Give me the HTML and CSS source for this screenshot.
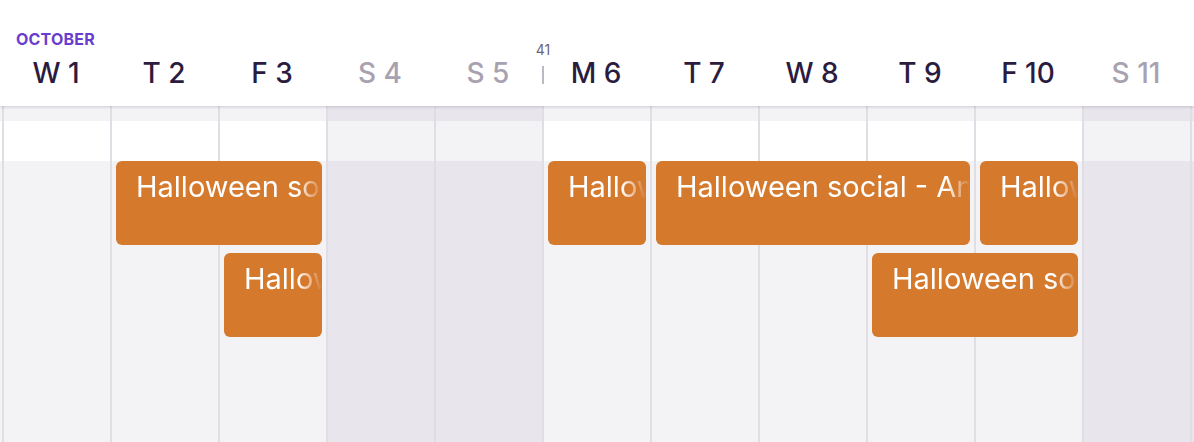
FILE: index.html
```html
<!DOCTYPE html>
<html lang="en">
<head>
<meta charset="utf-8">
<title>Calendar</title>
<link rel="stylesheet" href="styles.css">
</head>
<body>
<div class="cal">
  <header class="head">
    <div class="month">OCTOBER</div>
    <div class="days">
      <div class="day">T 30</div>
      <div class="day">W 1</div>
      <div class="day">T 2</div>
      <div class="day">F 3</div>
      <div class="day weekend">S 4</div>
      <div class="day weekend">S 5</div>
      <div class="day week-start"><span class="wk-num">41</span><span class="wk-tick"></span>M 6</div>
      <div class="day">T 7</div>
      <div class="day">W 8</div>
      <div class="day">T 9</div>
      <div class="day">F 10</div>
      <div class="day weekend">S 11</div>
      <div class="day weekend">S 12</div>
    </div>
  </header>
  <main class="grid">
    <div class="cols">
      <div class="col"><div class="band-top"></div><div class="band-mid"></div><div class="band-rest"></div></div>
      <div class="col"><div class="band-top"></div><div class="band-mid"></div><div class="band-rest"></div></div>
      <div class="col"><div class="band-top"></div><div class="band-mid"></div><div class="band-rest"></div></div>
      <div class="col"><div class="band-top"></div><div class="band-mid"></div><div class="band-rest"></div></div>
      <div class="col weekend"><div class="band-top"></div><div class="band-mid"></div><div class="band-rest"></div></div>
      <div class="col weekend"><div class="band-top"></div><div class="band-mid"></div><div class="band-rest"></div></div>
      <div class="col"><div class="band-top"></div><div class="band-mid"></div><div class="band-rest"></div></div>
      <div class="col"><div class="band-top"></div><div class="band-mid"></div><div class="band-rest"></div></div>
      <div class="col"><div class="band-top"></div><div class="band-mid"></div><div class="band-rest"></div></div>
      <div class="col"><div class="band-top"></div><div class="band-mid"></div><div class="band-rest"></div></div>
      <div class="col"><div class="band-top"></div><div class="band-mid"></div><div class="band-rest"></div></div>
      <div class="col weekend"><div class="band-top"></div><div class="band-mid"></div><div class="band-rest"></div></div>
      <div class="col weekend"><div class="band-top"></div><div class="band-mid"></div><div class="band-rest"></div></div>
    </div>
    <div class="event" style="grid-column: 3 / 5; grid-row: 3;"><span class="ev-title">Halloween social - Annual party</span></div>
    <div class="event" style="grid-column: 7 / 8; grid-row: 3;"><span class="ev-title">Halloween social - Annual party</span></div>
    <div class="event" style="grid-column: 8 / 11; grid-row: 3;"><span class="ev-title">Halloween social - Annual party</span></div>
    <div class="event" style="grid-column: 11 / 12; grid-row: 3;"><span class="ev-title">Halloween social - Annual party</span></div>
    <div class="event" style="grid-column: 4 / 5; grid-row: 5;"><span class="ev-title">Halloween social - Annual party</span></div>
    <div class="event" style="grid-column: 10 / 12; grid-row: 5;"><span class="ev-title">Halloween social - Annual party</span></div>
  </main>
</div>
</body>
</html>
```

FILE: styles.css
```css
* {
  box-sizing: border-box;
}

html, body {
  margin: 0;
  padding: 0;
  height: 100%;
  overflow: hidden;
  background: #ffffff;
}

body {
  font-family: Inter, "Noto Sans", sans-serif;
}

.cal {
  display: flex;
  flex-direction: column;
  height: 100vh;
  overflow: hidden;
}

.head {
  height: 106px;
  flex: none;
  background: #ffffff;
  padding-top: 29px;
  box-shadow: 0 1px 3px rgba(40, 30, 60, 0.18);
  position: relative;
  z-index: 2;
}

.month {
  margin-left: 16px;
  font-size: 16px;
  line-height: 20px;
  font-weight: 700;
  color: #6a3dd0;
  letter-spacing: 0.2px;
}

.days {
  margin-top: 7px;
  margin-left: -106px;
  display: grid;
  grid-template-columns: repeat(13, 108px);
}

.day {
  text-align: center;
  font-size: 28px;
  line-height: 34px;
  font-weight: 500;
  color: #2b1c3f;
  white-space: nowrap;
}

.day.weekend {
  color: #a8a2b0;
}

.week-start {
  position: relative;
}

.wk-num {
  position: absolute;
  left: 1px;
  top: -14px;
  transform: translateX(-50%);
  font-size: 14px;
  line-height: 16px;
  font-weight: 400;
  color: #6c6577;
}

.wk-tick {
  position: absolute;
  left: 0;
  top: 10px;
  width: 2px;
  height: 18px;
  background: #bdb8c4;
}

.grid {
  flex: 1;
  margin-left: -106px;
  display: grid;
  grid-template-columns: repeat(13, 108px);
  grid-template-rows: 15px 40px 84px 8px 84px 1fr;
}

.cols {
  grid-column: 1 / -1;
  grid-row: 1 / -1;
  display: flex;
}

.col {
  width: 108px;
  flex: none;
  border-left: 2px solid #e0dde4;
  display: flex;
  flex-direction: column;
}

.band-top {
  height: 15px;
  background: #f3f2f5;
}

.band-mid {
  height: 40px;
  background: #ffffff;
}

.band-rest {
  flex: 1;
  background: #f3f2f5;
}

.col.weekend .band-top,
.col.weekend .band-rest {
  background: #e8e6ec;
}

.col.weekend .band-mid {
  background: #f3f2f5;
}

.event {
  margin: 0 4px 0 6px;
  background: #d5792d;
  border-radius: 6px;
  padding: 8px 0 0 20px;
  overflow: hidden;
  display: flex;
  min-width: 0;
}

.ev-title {
  display: block;
  font-size: 29px;
  line-height: 35px;
  font-weight: 400;
  color: #ffffff;
  white-space: nowrap;
  overflow: hidden;
  flex: 1;
  min-width: 0;
  -webkit-mask-image: linear-gradient(to right, #000 calc(100% - 24px), transparent);
  mask-image: linear-gradient(to right, #000 calc(100% - 24px), transparent);
}
```
